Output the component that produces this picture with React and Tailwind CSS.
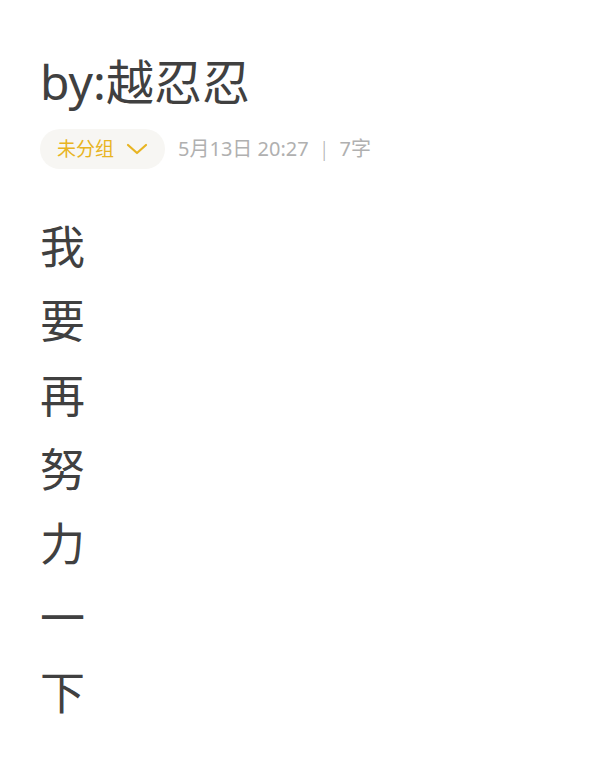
import React from "react";

const body = ["我", "要", "再", "努", "力", "一", "下"];

const font = { fontFamily: '"Noto Sans", "Noto Sans CJK SC", sans-serif' };

const ChevronDown = () => (
  <svg className="w-[22px] h-[14px] ml-[12px]" viewBox="0 0 22 14" fill="none">
    <path d="M2 3l9 8 9-8" stroke="#e8b422" strokeWidth="2.2" strokeLinecap="round" strokeLinejoin="round" />
  </svg>
);

const App = () => {
  return (
    <div className="w-[592px] h-[783px] bg-white overflow-hidden" style={font}>
      <div className="pl-[40px] pt-[50px]">
        <h1 className="text-[48px] leading-[64px] text-[#404040]">by:越忍忍</h1>
        <div className="flex items-center mt-[15px]">
          <div className="flex items-center h-[40px] rounded-full bg-[#f7f6f3] pl-[17px] pr-[17px]">
            <span className="text-[19px] text-[#e8b422]">未分组</span>
            <ChevronDown />
          </div>
          <span className="ml-[13px] text-[20px] text-[#b0b0b0]">5月13日 20:27</span>
          <span className="mx-[10px] text-[20px] text-[#b0b0b0] font-light">|</span>
          <span className="text-[20px] text-[#b0b0b0]">7字</span>
        </div>
        <div className="mt-[41px]">
          {body.map((c, i) => (
            <div key={i} className="text-[45px] leading-[74.3px] text-[#404040]">{c}</div>
          ))}
        </div>
      </div>
    </div>
  );
};

export default App;
